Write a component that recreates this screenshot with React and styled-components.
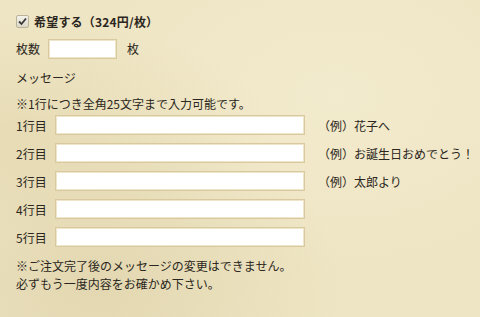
import React from 'react';
import styled, { createGlobalStyle } from 'styled-components';

const GlobalStyle = createGlobalStyle`
  html, body {
    margin: 0;
    padding: 0;
  }
  body {
    background: #eee5c4;
    font-family: "Noto Sans CJK JP", "Noto Sans", sans-serif;
    font-size: 12px;
    color: #2b2620;
  }
`;

const Page = styled.div`
  width: 480px;
  height: 317px;
  box-sizing: border-box;
  padding: 12px 16px 0;
  background:
    radial-gradient(ellipse at 20% 90%, rgba(205, 190, 140, 0.35), transparent 45%),
    radial-gradient(ellipse at 0% 40%, rgba(215, 200, 150, 0.3), transparent 40%),
    radial-gradient(ellipse at 70% 30%, rgba(250, 245, 220, 0.35), transparent 55%),
    #eee5c4;
  overflow: hidden;
`;

const Row = styled.div`
  display: flex;
  align-items: center;
  height: ${(p) => p.h || 20}px;
  margin-top: ${(p) => p.mt || 0}px;
`;

const CheckBox = styled.span`
  flex-shrink: 0;
  width: 11px;
  height: 11px;
  border: 1px solid #b9b39b;
  border-radius: 2px;
  background: linear-gradient(#f4f2ea, #dcd8c8);
  display: inline-flex;
  align-items: center;
  justify-content: center;
  margin-right: 5px;
`;

const Strong = styled.span`
  font-weight: bold;
  letter-spacing: 0.2px;
`;

const Text = styled.span`
  line-height: 18px;
  white-space: nowrap;
  flex-shrink: 0;
  width: ${(p) => (p.w ? `${p.w}px` : 'auto')};
  margin-left: ${(p) => p.ml || 0}px;
`;

const Field = styled.span`
  display: inline-block;
  flex-shrink: 0;
  box-sizing: border-box;
  width: ${(p) => p.w}px;
  height: 20px;
  background: #fff;
  border: 1px solid #d8c9a0;
  box-shadow: inset 0 0 0 1px #efe5c8;
`;

const LineLabel = styled.span`
  flex-shrink: 0;
  width: 39px;
  white-space: nowrap;
`;

const Example = styled.span`
  margin-left: 13px;
  white-space: nowrap;
`;

const Notes = styled.div`
  margin-top: 10px;
  line-height: 18px;
`;

const lines = [
  { n: 1, ex: '（例）花子へ' },
  { n: 2, ex: '（例）お誕生日おめでとう！' },
  { n: 3, ex: '（例）太郎より' },
  { n: 4, ex: '' },
  { n: 5, ex: '' },
];

export default function App() {
  return (
    <>
      <GlobalStyle />
      <Page>
        <Row h={18}>
          <CheckBox>
            <svg width="9" height="9" viewBox="0 0 9 9">
              <path d="M1 4.5 L3.5 7 L8 1.5" fill="none" stroke="#3a3a3a" strokeWidth="1.8" />
            </svg>
          </CheckBox>
          <Strong>希望する（324円/枚）</Strong>
        </Row>
        <Row h={20} mt={9}>
          <Text w={32}>枚数</Text>
          <Field w={69} />
          <Text ml={10}>枚</Text>
        </Row>
        <Row h={18} mt={10}>
          <Text>メッセージ</Text>
        </Row>
        <Row h={18} mt={8}>
          <Text>※1行につき全角25文字まで入力可能です。</Text>
        </Row>
        {lines.map((l) => (
          <Row key={l.n} h={20} mt={l.n === 1 ? 2 : 8}>
            <LineLabel>{l.n}行目</LineLabel>
            <Field w={250} />
            {l.ex && <Example>{l.ex}</Example>}
          </Row>
        ))}
        <Notes>
          ※ご注文完了後のメッセージの変更はできません。
          <br />
          必ずもう一度内容をお確かめ下さい。
        </Notes>
      </Page>
    </>
  );
}
